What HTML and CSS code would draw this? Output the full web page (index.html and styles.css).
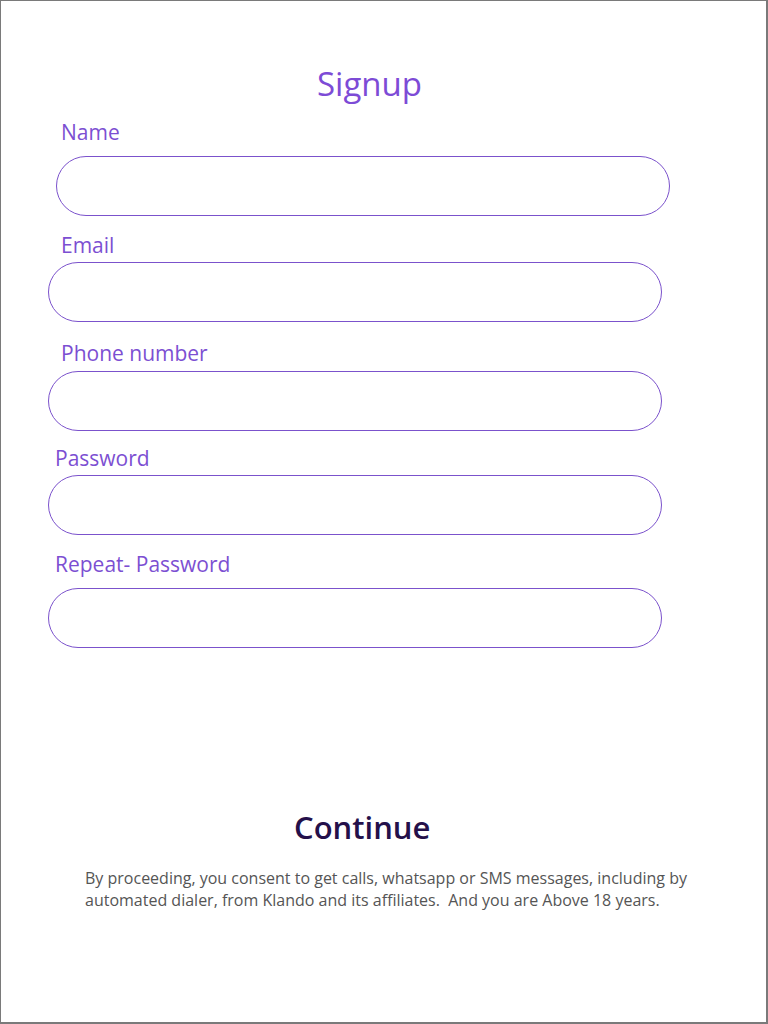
FILE: index.html
```html
<!DOCTYPE html>
<html lang="en">
<head>
<meta charset="utf-8">
<title>Signup</title>
<link rel="stylesheet" href="styles.css">
</head>
<body>
<main class="frame">
  <h1 class="title">Signup</h1>
  <form class="form">
    <div class="group group--first">
      <label class="label label--wide" for="name">Name</label>
      <input class="field field--name" id="name" type="text">
    </div>
    <div class="group group--email">
      <label class="label label--wide" for="email">Email</label>
      <input class="field" id="email" type="email">
    </div>
    <div class="group group--phone">
      <label class="label label--wide" for="phone">Phone number</label>
      <input class="field" id="phone" type="tel">
    </div>
    <div class="group group--password">
      <label class="label" for="password">Password</label>
      <input class="field" id="password" type="password">
    </div>
    <div class="group group--repeat">
      <label class="label" for="repeat">Repeat- Password</label>
      <input class="field field--repeat" id="repeat" type="password">
    </div>
  </form>
  <div class="continue">Continue</div>
  <p class="disclaimer">By proceeding, you consent to get calls, whatsapp or SMS messages, including by<br>automated dialer, from Klando and its affiliates.&nbsp; And you are Above 18 years.</p>
</main>
</body>
</html>
```

FILE: styles.css
```css
html, body {
  margin: 0;
  padding: 0;
  background: #ffffff;
}

.frame {
  box-sizing: border-box;
  width: 768px;
  height: 1024px;
  border: 1px solid #7a7a7a;
  border-right-width: 2px;
  border-bottom-width: 2px;
  font-family: "Open Sans", "Liberation Sans", sans-serif;
  display: flex;
  flex-direction: column;
}

.title {
  margin: 0;
  padding: 63px 0 0 316px;
  font-size: 33px;
  line-height: 40px;
  font-weight: 400;
  color: #7d4bd6;
}

.form {
  display: flex;
  flex-direction: column;
}

.group {
  display: flex;
  flex-direction: column;
  margin-left: 47px;
}

.group--first {
  margin-top: 15px;
  margin-left: 55px;
}

.group--email { margin-top: 16px; }
.group--phone { margin-top: 18px; }
.group--password { margin-top: 14px; }
.group--repeat { margin-top: 16px; }

.label {
  font-size: 21px;
  line-height: 26px;
  color: #7c4fd2;
  padding-left: 7px;
  margin-bottom: 4px;
}

.group--first .label {
  padding-left: 5px;
  margin-bottom: 11px;
}

.group--phone .label { margin-bottom: 5px; }
.group--repeat .label { margin-bottom: 11px; }

.label--wide { padding-left: 13px; }

.field {
  box-sizing: border-box;
  width: 614px;
  height: 60px;
  border: 1px solid #7b52cc;
  border-radius: 30px;
  background: #ffffff;
  outline: none;
  padding: 0 24px;
  font: inherit;
}

.continue {
  margin-top: 159px;
  padding-left: 293px;
  font-size: 31px;
  line-height: 40px;
  font-weight: 600;
  color: #24104a;
}

.disclaimer {
  margin: 20px 0 0;
  padding-left: 84px;
  font-size: 16px;
  line-height: 22px;
  color: #555555;
}
```
